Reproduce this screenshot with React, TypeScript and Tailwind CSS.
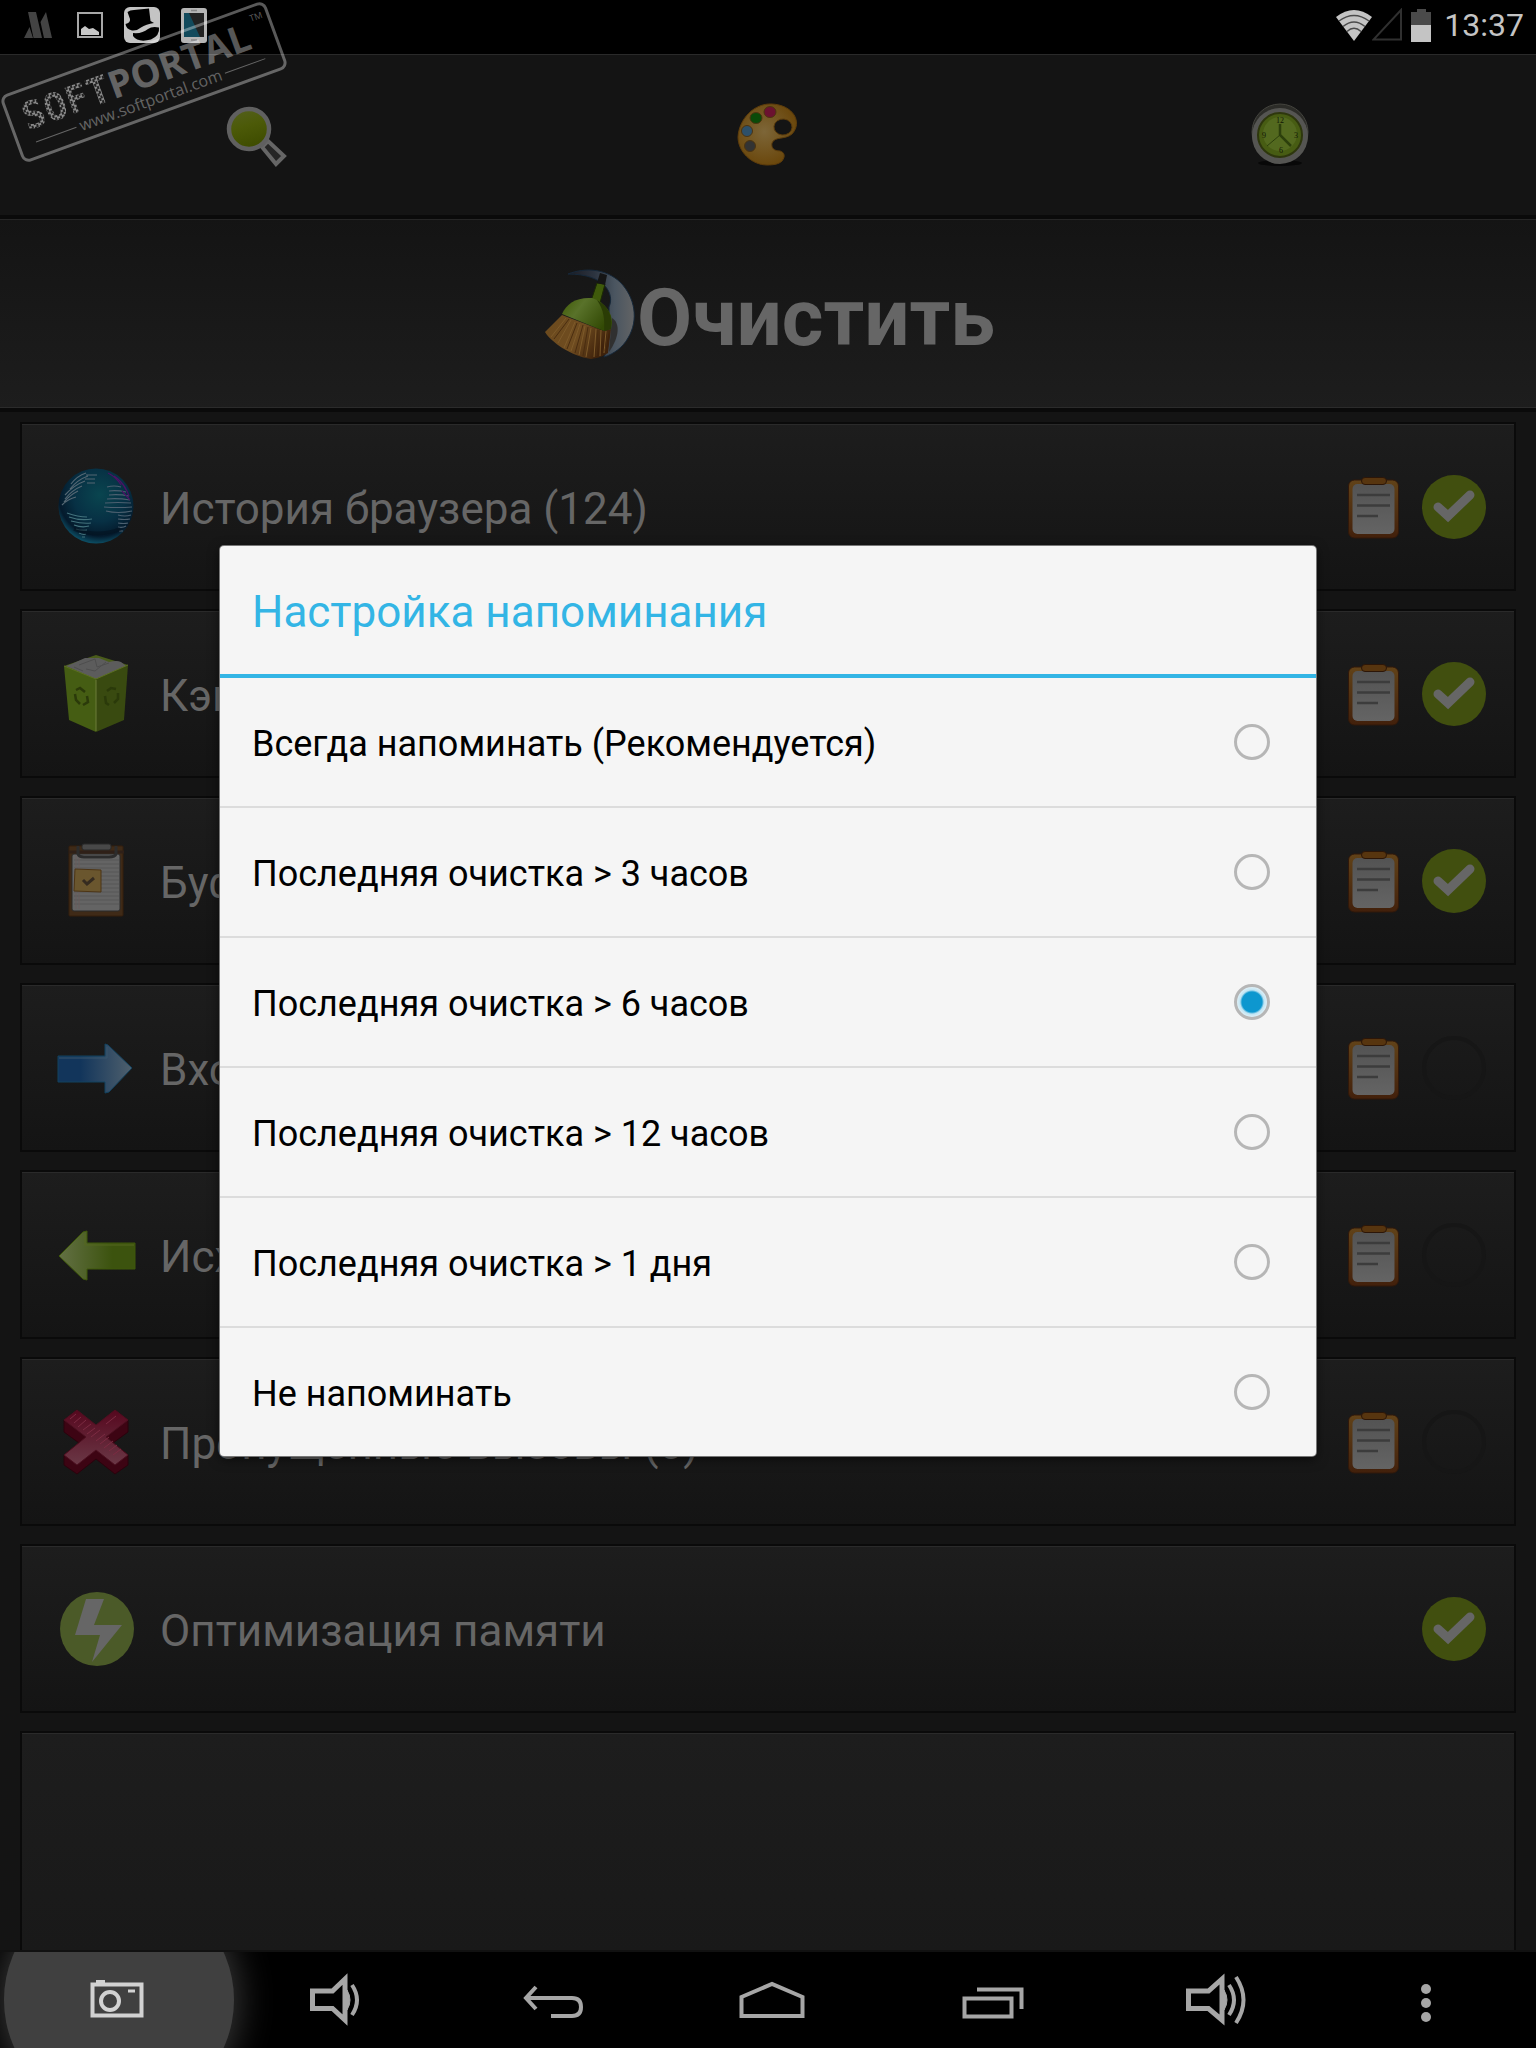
import { useState } from "react";
import type { ReactNode } from "react";

const reminderOptions = [
  "Всегда напоминать (Рекомендуется)",
  "Последняя очистка > 3 часов",
  "Последняя очистка > 6 часов",
  "Последняя очистка > 12 часов",
  "Последняя очистка > 1 дня",
  "Не напоминать",
];

/* ---------- status bar ---------- */

function StatusBar() {
  return (
    <header className="flex h-[54px] shrink-0 items-center justify-between bg-black pr-3 pb-1 pl-3">
      <div className="flex items-center">
        <svg viewBox="0 0 52 36" className="h-9 w-[52px]" fill="#434343">
          <path d="M12 31 17.500 20 21 31ZM16 5h8l6 26h-8.500ZM28.500 15 34 5l6 26h-8Z" />
        </svg>
        <svg viewBox="0 0 52 36" className="h-9 w-[52px]">
          <rect x="14" y="6" width="24" height="24" fill="none" stroke="#a8a8a8" strokeWidth="2" />
          <path d="M17 28v-6l4-3 4 3 4-1 6 4v3Z" fill="#c8c8c8" />
        </svg>
        <svg viewBox="0 0 52 36" className="h-9 w-[52px]">
          <rect x="8" width="36" height="36" rx="6" fill="#c4c4c4" />
          <path
            d="M11.500 5Q14 3 18 3L33 1.500 34.500 14 38 16Q30 17 25 20.500 21 24 16 23.500 10 22 9.500 17q5-1 4.500-5Z"
            fill="#000"
          />
          <path d="M17 26q9 1 15-4 4-3 11-1.500 1 8-8 12-13 3.500-18-3.500Z" fill="#000" />
        </svg>
        <svg viewBox="0 0 52 36" className="h-9 w-[52px]">
          <rect x="13" y="1" width="26" height="35" rx="3" fill="#b5b5b5" />
          <rect x="16" y="6" width="20" height="24" fill="#222" />
          <path d="M16 6h5l11 24H16Z" fill="#124a5c" />
          <path d="M23 3.500h6M23 33h6" stroke="#858585" strokeWidth="1.500" />
        </svg>
      </div>
      <div className="flex items-center">
        <svg viewBox="0 0 38 34" className="h-[34px] w-[38px]">
          <path d="M20 33 2 9Q20-5 38 9Z" fill="#c4c4c4" />
          <path
            d="M5 13Q20 2 35 13M9 18.500Q20 9.500 31 18.500M13 23.500Q20 17 27 23.500"
            fill="none"
            stroke="#4a4a4a"
            strokeWidth="1.500"
          />
        </svg>
        <svg viewBox="0 0 34 34" className="h-[34px] w-[34px]">
          <path d="M29 2v29.500H1.500Z" fill="none" stroke="#303030" strokeWidth="2" />
        </svg>
        <svg viewBox="0 0 34 34" className="mr-1 h-[34px] w-[34px]">
          <path d="M11 1h9v3h5v30H5V4h6Z" fill="#4a4a4a" />
          <path d="M5 17h20v17H5Z" fill="#c4c4c4" />
        </svg>
        <time className="text-[32px] leading-9 text-[#c4c4c4]">13:37</time>
      </div>
    </header>
  );
}

function Stamp() {
  return (
    <div className="pointer-events-none absolute top-[46px] left-[3px] z-20 h-[72px] w-[282px] -rotate-[20deg] rounded-lg border-[3px] border-white/35 text-white/35">
      <div className="flex items-baseline pt-1 pl-3 leading-10">
        <span className="bg-[repeating-conic-gradient(#8a8a8a_0_25%,#222_0_50%)] bg-[length:5px_5px] bg-clip-text font-['DejaVu_Sans_Mono',monospace] text-[38px] font-bold text-transparent">
          SOFT
        </span>
        <span className="font-['Open_Sans',sans-serif] text-[38px] font-bold">PORTAL</span>
      </div>
      <span className="absolute top-1 right-1 font-['Open_Sans',sans-serif] text-[9px] leading-3">TM</span>
      <div className="-mt-1 flex items-center gap-1 px-4 font-['Open_Sans',sans-serif] text-[16px] leading-5">
        <span className="h-px flex-1 bg-current" />
        www.softportal.com
        <span className="h-px flex-1 bg-current" />
      </div>
    </div>
  );
}

/* ---------- toolbar icons ---------- */

function SearchIcon() {
  return (
    <svg viewBox="0 0 64 64" className="size-16">
      <defs>
        <linearGradient id="lens" x1="0" y1="0" x2="0.300" y2="1">
          <stop offset="0" stopColor="#546020" />
          <stop offset="0.500" stopColor="#4c5a08" />
          <stop offset="1" stopColor="#3f4d00" />
        </linearGradient>
      </defs>
      <path d="M38 44 44 38 60 53 52 61Z" fill="#252525" stroke="#666" strokeWidth="4" />
      <circle cx="25" cy="26" r="20" fill="url(#lens)" stroke="#606060" strokeWidth="4.500" />
    </svg>
  );
}

function PaletteIcon() {
  return (
    <svg viewBox="0 0 64 64" className="size-16">
      <defs>
        <radialGradient id="wood" cx="0.450" cy="0.450" r="0.600">
          <stop offset="0" stopColor="#7d6638" />
          <stop offset="1" stopColor="#694509" />
        </radialGradient>
      </defs>
      <path
        fillRule="evenodd"
        d="M36 1C18 0 3 16 2 34c0 15 14 28 29 28 7 0 12-1 15-4 4-5 2-9-2-10-6 0-9-3-8-8 3-7 13-3 20-9C67 19 57 2 36 1ZM48 16a9 8 0 1 1-2 16 9 8 0 0 1 2-16Z"
        fill="url(#wood)"
        stroke="#5d3c0b"
        strokeWidth="1"
      />
      <ellipse cx="34" cy="9" rx="6" ry="5.500" fill="#6b1230" stroke="#4d3410" />
      <ellipse cx="20" cy="15" rx="6" ry="5.500" fill="#0b4a08" stroke="#4d3410" />
      <ellipse cx="11" cy="28" rx="5.500" ry="5.500" fill="#2d5069" stroke="#4d3410" />
      <ellipse cx="14" cy="43" rx="5.500" ry="5.500" fill="#333" stroke="#4d3410" />
    </svg>
  );
}

function ClockIcon() {
  return (
    <svg viewBox="0 0 64 64" className="size-16">
      <ellipse cx="32" cy="60" rx="22" ry="3" fill="#080808" />
      <circle cx="32" cy="29" r="28" fill="#2c2c28" stroke="#44443e" strokeWidth="1" />
      <circle cx="32" cy="33" r="28" fill="#555552" />
      <circle cx="32" cy="32" r="22" fill="#475c13" stroke="#2e370d" strokeWidth="2" />
      <circle cx="32" cy="31" r="17" fill="#53691f" />
      <g fill="#101505" fontSize="8" fontFamily="Liberation Serif, serif" textAnchor="middle">
        <text x="32" y="20">12</text>
        <text x="48" y="35">3</text>
        <text x="33" y="50">6</text>
        <text x="16" y="35">9</text>
      </g>
      <path d="M32 21v11l11 11" fill="none" stroke="#2c3f0c" strokeWidth="2.500" />
      <path d="m32 32-13 11" stroke="#2c3f0c" />
    </svg>
  );
}

function BroomIcon() {
  return (
    <svg viewBox="0 0 96 96" className="size-24">
      <defs>
        <linearGradient id="moon-tail" x1="0" y1="0" x2="1" y2="0">
          <stop offset="0" stopColor="#1b1b22" />
          <stop offset="0.400" stopColor="#2c3440" />
          <stop offset="0.700" stopColor="#4a5560" />
          <stop offset="1" stopColor="#636465" />
        </linearGradient>
        <linearGradient id="bristle" x1="0" y1="0" x2="1" y2="0.400">
          <stop offset="0" stopColor="#6b4a1d" />
          <stop offset="0.600" stopColor="#6f4c20" />
          <stop offset="1" stopColor="#3f220b" />
        </linearGradient>
        <linearGradient id="pan" x1="0" y1="0" x2="1" y2="0.500">
          <stop offset="0" stopColor="#3f5a05" />
          <stop offset="0.400" stopColor="#59722a" />
          <stop offset="1" stopColor="#334a05" />
        </linearGradient>
      </defs>
      <path
        d="M27 8C45 1 65 3 79 16c15 15 19 38 8 56-5 9-14 16-24 19 5-10 5-20 5-30l0-20C74 28 64 8 27 8Z"
        fill="url(#moon-tail)"
        stroke="#16283a"
        strokeWidth="1"
      />
      <path d="M71 52c8 5 8 18-3 34Z" fill="#303030" />
      <path d="M21 49 4 66c6 10 26 24 46 27 8-1 12-3 17-6l3-24-7 2Z" fill="url(#bristle)" />
      <path
        d="m25 52-15 19M30 54 17 77M34 56 23 82M39 58 30 85M44 60l-6 29M50 62l-5 29M55 63l-2 28M60 64l-1 26M65 65l-2 22"
        stroke="#7d5a2a"
        strokeWidth="1"
      />
      <path
        d="m28 53-15 20M36 57 26 83M42 59l-8 28M47 61l-5 29M57 64l-2 26M67 65l-3 20"
        stroke="#4a2d10"
        strokeWidth="1"
      />
      <path d="m56 17 8 1-5 19-9-2Z" fill="#3f5a0b" stroke="#1c2b03" strokeWidth="1" />
      <path d="m59 7 7 2-2 10-8-2Z" fill="#151515" />
      <path d="M21 48c4-10 14-17 30-16 14 5 20 15 20 25l-1 6-7 2Z" fill="url(#pan)" />
      <path d="M56 34c12 7 15 15 14 29l-7 2c1-11 0-21-7-31Z" fill="#2a3c05" />
    </svg>
  );
}

/* ---------- list icons ---------- */

function GlobeIcon() {
  return (
    <svg viewBox="0 0 80 80" className="size-20">
      <defs>
        <radialGradient id="sea" cx="0.550" cy="0.350" r="0.650">
          <stop offset="0" stopColor="#09454f" />
          <stop offset="0.550" stopColor="#073044" />
          <stop offset="0.850" stopColor="#041a2c" />
          <stop offset="1" stopColor="#0c4d63" />
        </radialGradient>
        <clipPath id="globe-clip">
          <circle cx="40" cy="40" r="37" />
        </clipPath>
      </defs>
      <circle cx="40" cy="39" r="37.500" fill="url(#sea)" />
      <g clipPath="url(#globe-clip)" fill="none" strokeWidth="1.200">
        <path
          d="M30 6q-9 3-15 11M32 9q-11 4-18 13M29 14Q18 18 9 28M26 19q-10 4-17 13M22 24q-8 4-14 11M20 30q-8 2-14 8M30 8h11M29 12h10M31 16h8"
          stroke="#546773"
        />
        <path
          d="M51 20q7-2 14 0M53 24q8-1 17 1M53 28q10-1 20 1M51 32q11-1 23 1M49 36q13-1 26 0M48 40q14 1 28 0M50 44q12 3 26 0M62 48q7 2 13 0M62 52q7 1 12 0M62 56q6 1 10 0M62 60q5 1 8-1M63 64h4"
          stroke="#4c6070"
        />
        <path d="M52 6q8 4 13 12M58 9q8 5 12 14M64 14q6 6 9 15M66 24l8 9" stroke="#4b1265" />
        <path
          d="M11 46q11 4 20 4M13 50q11 4 23 2M15 54q12 3 20 2M18 58q8 3 15 1M20 62q6 2 11 1M23 66q4 2 7 1M26 70h3"
          stroke="#43727c"
        />
        <path d="M18 62q24 9 46 0" stroke="#031220" strokeWidth="4" opacity="0.600" />
      </g>
    </svg>
  );
}

function BinIcon() {
  return (
    <svg viewBox="0 0 80 80" className="size-20">
      <path d="m8 12 32-11 32 10-32 15Z" fill="#4a5c1b" />
      <path d="M10 12q6-2 10-4l9-4 14 0 10 4q8-2 12 0l5 4-30 13Z" fill="#5c5c5c" />
      <path d="m23 11 16-6 2 8 12-4M30 15l9 2 11-9M18 13l9 4" fill="none" stroke="#4e4e4e" />
      <path d="m8 12 32 13v53L13 66Z" fill="#455d13" />
      <path d="M72 11 40 25v53l28-12Z" fill="#394a10" />
      <path d="M40 26v51" stroke="#6c7c39" />
      <path d="m8 12 32 13 32-14" fill="none" stroke="#5c7023" />
      <g fill="none" stroke="#2b3a0a" strokeWidth="2.500">
        <path d="m20 36 4-2 5 4M19 40l1 6 4 4M31 42l1 6-5 3" />
        <path d="m51 37 4-3 5 1M49 42l1 7 3 2M62 39v6l-4 4" />
      </g>
    </svg>
  );
}

function BufferIcon() {
  return (
    <svg viewBox="0 0 80 80" className="size-20">
      <rect x="13" y="5" width="54" height="70" rx="1" fill="#3f2a17" stroke="#341e0c" />
      <rect x="16" y="13" width="48" height="57" rx="2" fill="#646464" stroke="#2a2a2a" />
      <path
        d="M18 19h45M18 23h45M18 27h45M18 31h45M18 35h45M18 39h45M18 43h45M18 47h45M18 51h45M18 55h45M18 59h45M18 63h45"
        stroke="#575757"
      />
      <path d="M20 14v54M23 14v54" stroke="#6a5c5c" />
      <path d="M13 11h55" stroke="#2f2018" strokeWidth="3" />
      <path d="M22 5v8q1 3 6 3h25q6 0 7-3V5" fill="none" stroke="#2c2c2c" strokeWidth="3" />
      <rect x="26" y="3" width="29" height="6" rx="2" fill="#484848" stroke="#282828" />
      <path d="m19 28 26 1v22l-27-1Z" fill="#6a562e" stroke="#4d3515" />
      <path d="m27 39 4 4 7-6" fill="none" stroke="#352b20" strokeWidth="3" />
    </svg>
  );
}

function IncomingIcon() {
  return (
    <svg viewBox="0 0 80 80" className="size-20">
      <defs>
        <linearGradient id="blue-arrow">
          <stop offset="0.300" stopColor="#12355b" />
          <stop offset="1" stopColor="#4f606d" />
        </linearGradient>
      </defs>
      <path d="M2 28h47V16l3 1 24 23-23 24-4 1V54H2Z" fill="url(#blue-arrow)" stroke="#12425f" />
      <path d="M3 30h48V19" fill="none" stroke="#38576d" />
    </svg>
  );
}

function OutgoingIcon() {
  return (
    <svg viewBox="0 0 80 80" className="size-20">
      <defs>
        <linearGradient id="green-arrow">
          <stop offset="0" stopColor="#637044" />
          <stop offset="0.700" stopColor="#3c530e" />
        </linearGradient>
      </defs>
      <path d="M79 28H31V16l-4 1L3 41l24 23 4 1V54h48Z" fill="url(#green-arrow)" stroke="#3f590a" />
      <path d="M78 30H29V19" fill="none" stroke="#54691f" />
    </svg>
  );
}

function MissedIcon() {
  return (
    <svg viewBox="0 0 80 80" className="size-20">
      <defs>
        <linearGradient id="cross" x1="0" y1="0" x2="0" y2="1">
          <stop offset="0" stopColor="#56071e" />
          <stop offset="1" stopColor="#6a3846" />
        </linearGradient>
      </defs>
      <path
        d="M8 18 21 8l19 16L59 8l13 10v12L57 41l15 12v10L59 72 40 57 21 72 8 63V53l15-12L8 30Z"
        fill="#3d0413"
        stroke="#2b020c"
      />
      <path
        d="M8 18 21 8l19 15L59 8l13 10-22 17 22 18-13 10-19-15-19 15L8 53l22-18Z"
        fill="url(#cross)"
        stroke="#4c1020"
      />
      <path
        d="m14 17 6-5M18 21l7-6M22 25l8-7M27 28l8-6M31 32l8-6M35 35l9-7M40 39l9-7M44 42l9-7M48 46l9-7M53 49l8-6M57 53l8-6M50 22l5-4M55 18l5-4"
        stroke="#7c2b42"
      />
    </svg>
  );
}

function MemoryIcon() {
  return (
    <svg viewBox="0 0 80 80" className="size-20">
      <circle cx="41" cy="40" r="37" fill="#4b5a28" />
      <path d="M30 10h18L38 36h28L36 73l8-27H19Z" fill="#666" />
    </svg>
  );
}

/* ---------- row controls ---------- */

function DetailsButton({ label }: { label: string }) {
  return (
    <button type="button" aria-label={label} className="size-16">
      <svg viewBox="0 0 64 64" className="size-16">
        <defs>
          <linearGradient id="board" x1="0" y1="0" x2="0" y2="1">
            <stop offset="0" stopColor="#614218" />
            <stop offset="1" stopColor="#42200b" />
          </linearGradient>
          <linearGradient id="sheet" x1="0" y1="0" x2="0" y2="1">
            <stop offset="0" stopColor="#535353" />
            <stop offset="1" stopColor="#646464" />
          </linearGradient>
        </defs>
        <rect x="6.500" y="5" width="50" height="58" rx="6" fill="url(#board)" stroke="#30180a" />
        <rect x="10.500" y="9" width="42" height="50" rx="5" fill="url(#sheet)" />
        <rect x="19.500" y="2.500" width="25" height="7" rx="3.500" fill="#57350f" stroke="#2c1608" />
        <path d="M15 20h33M15 30.500h33M15 41h21" stroke="#3c3c3c" strokeWidth="2.500" />
      </svg>
    </button>
  );
}

function CheckToggle({ label, defaultChecked }: { label: string; defaultChecked: boolean }) {
  return (
    <label className="relative size-16">
      <input
        type="checkbox"
        aria-label={label}
        defaultChecked={defaultChecked}
        className="peer block size-16 appearance-none rounded-full border-4 border-[#161616] checked:border-0 checked:bg-[#414f0f]"
      />
      <svg viewBox="0 0 64 64" className="absolute inset-0 hidden size-16 peer-checked:block">
        <path
          d="m16 32 10 9 22-21"
          fill="none"
          stroke="#666"
          strokeWidth="9"
          strokeLinecap="round"
        />
      </svg>
    </label>
  );
}

type Item = { name: string; icon: ReactNode; checked: boolean; details: boolean };

const items: Item[] = [
  { name: "История браузера (124)", icon: <GlobeIcon />, checked: true, details: true },
  { name: "Кэш", icon: <BinIcon />, checked: true, details: true },
  { name: "Буфер обмена", icon: <BufferIcon />, checked: true, details: true },
  { name: "Входящие", icon: <IncomingIcon />, checked: false, details: true },
  { name: "Исходящие", icon: <OutgoingIcon />, checked: false, details: true },
  { name: "Пропущенные вызовы (0)", icon: <MissedIcon />, checked: false, details: true },
  { name: "Оптимизация памяти", icon: <MemoryIcon />, checked: true, details: false },
];

function CleanRow({ item }: { item: Item }) {
  return (
    <li className="flex h-[169px] shrink-0 items-center gap-4 border-2 border-[#0a0a0a] bg-linear-to-b from-[#1d1d1d] to-[#141414] pr-7 pl-[34px] shadow-[inset_0_1px_0_#2a2a2a]">
      {item.icon}
      <span className="ml-2 flex-1 pt-1 text-[44px] leading-[52px] text-[#666]">{item.name}</span>
      {item.details && <DetailsButton label={`Список: ${item.name}`} />}
      <CheckToggle label={item.name} defaultChecked={item.checked} />
    </li>
  );
}

/* ---------- navigation bar ---------- */

function NavButton({ label, active, children }: { label: string; active?: boolean; children: ReactNode }) {
  return (
    <button type="button" aria-label={label} className="relative flex h-24 flex-1 items-center justify-center">
      {active && (
        <span className="absolute left-[-4px] size-[230px] rounded-full bg-[#404040] shadow-[0_0_36px_4px_#3a3a3a]" />
      )}
      <svg viewBox="0 0 96 96" className="relative size-24" fill="none" stroke="#a6a6a6" strokeWidth="4">
        {children}
      </svg>
    </button>
  );
}

function NavBar() {
  return (
    <nav className="flex h-[98px] shrink-0 overflow-hidden border-t-2 border-[#111] bg-black pl-2">
      <NavButton label="Снимок экрана" active>
        <g stroke="#d2d2d2">
          <path d="M23.500 32.500h49v31h-49Z" />
          <path d="M28 31h7v-2h-7Z" fill="#d2d2d2" strokeWidth="2" />
          <circle cx="41" cy="49" r="9" />
          <path d="M59 39h7" strokeWidth="3" />
        </g>
      </NavButton>
      <NavButton label="Тише">
        <path d="M25.500 39h20L58 27v41L45.500 56.500h-20Z" strokeWidth="5" />
        <path d="M60 38q6 10 0 20Z" fill="#a6a6a6" strokeWidth="1" />
        <path d="M65 33q10 15 0 30" />
      </NavButton>
      <NavButton label="Назад">
        <path d="M30 35 20 46l10 11M20 46h46q9 0 9 9t-9 9H45" />
      </NavButton>
      <NavButton label="Домой">
        <path d="M17.500 64V45L48 32l30.500 13v19Z" />
      </NavButton>
      <NavButton label="Недавние приложения">
        <path d="M22.500 46.500h47v18h-47ZM35 37.500h44.500V57" />
      </NavButton>
      <NavButton label="Громче">
        <path d="M27.500 39h20L61 27v41L47.500 56.500h-20Z" strokeWidth="5" />
        <path d="M63 38q6 10 0 20Z" fill="#a6a6a6" strokeWidth="1" />
        <path d="M68 33q10 15 0 30M75 25q15 23 0 46" />
      </NavButton>
      <NavButton label="Меню">
        <g fill="#a6a6a6" stroke="none">
          <circle cx="47" cy="37" r="5" />
          <circle cx="47" cy="51" r="5" />
          <circle cx="47" cy="65" r="5" />
        </g>
      </NavButton>
    </nav>
  );
}

/* ---------- dialog ---------- */

function ReminderDialog() {
  const [selected, setSelected] = useState(2);

  return (
    <div className="absolute inset-0 z-30 flex items-center px-[220px] pt-[50px] pb-24">
      <div
        role="dialog"
        aria-labelledby="reminder-title"
        className="w-full rounded-[4px] bg-[#f5f5f5] shadow-[0_0_0_1px_#777,0_3px_12px_rgba(0,0,0,0.600)]"
      >
        <h2
          id="reminder-title"
          className="flex h-33 items-center border-b-4 border-[#33b5e5] px-8 pt-1 text-[44px] leading-[52px] text-[#33b5e5]"
        >
          Настройка напоминания
        </h2>
        <div className="divide-y-2 divide-[#dcdcdc]">
          {reminderOptions.map((option, index) => (
            <label key={option} className="flex h-[130px] items-center justify-between pr-[46px] pl-8 last:h-32">
              <span className="pt-1 text-[36px] leading-[42px] text-black">{option}</span>
              <input
                type="radio"
                name="reminder"
                checked={selected === index}
                onChange={() => setSelected(index)}
                className="size-9 appearance-none rounded-full border-[3px] border-[#b6b6b6] checked:bg-[radial-gradient(circle,#0d97cf_0_10px,#bfe4f3_12px,#dff0f7_15px)]"
              />
            </label>
          ))}
        </div>
      </div>
    </div>
  );
}

export default function App() {
  return (
    <div className="relative flex h-screen flex-col overflow-hidden bg-[#141414] font-[Roboto,sans-serif]">
      <StatusBar />
      <Stamp />

      {/* Toolbar */}
      <div className="grid h-[165px] shrink-0 grid-cols-3 border-t border-b-4 border-t-[#2a2a2a] border-b-[#0a0a0a]">
        <button type="button" aria-label="Поиск" className="flex items-center justify-center">
          <SearchIcon />
        </button>
        <button type="button" aria-label="Темы" className="flex items-center justify-center">
          <PaletteIcon />
        </button>
        <button type="button" aria-label="Напоминание" className="flex items-center justify-center">
          <ClockIcon />
        </button>
      </div>

      {/* Clean */}
      <button
        type="button"
        className="flex h-[193px] shrink-0 items-center justify-center border-b-4 border-[#0a0a0a] bg-linear-to-b from-[#141414] to-[#1d1d1d] text-[80px] leading-[94px] font-bold text-[#666] shadow-[inset_0_1px_0_#262626,inset_0_-1px_0_#2b2b2b]"
      >
        <BroomIcon />
        <span className="pt-2">Очистить</span>
      </button>

      <ul className="flex min-h-0 flex-1 flex-col gap-[18px] overflow-hidden px-5 pt-[10px]">
        {items.map((item) => (
          <CleanRow key={item.name} item={item} />
        ))}
        <li className="flex-1 border-2 border-b-0 border-[#0a0a0a] bg-linear-to-b from-[#1d1d1d] to-[#191919] shadow-[inset_0_1px_0_#2a2a2a]" />
      </ul>

      <NavBar />
      <ReminderDialog />
    </div>
  );
}
